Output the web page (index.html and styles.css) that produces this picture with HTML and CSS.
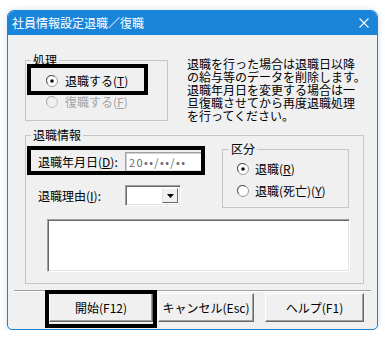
FILE: index.html
```html
<!DOCTYPE html>
<html lang="ja">
<head>
<meta charset="utf-8">
<title>社員情報設定退職／復職</title>
<link rel="stylesheet" href="styles.css">
</head>
<body>
<div class="window">
  <div class="titlebar">
    <span class="title">社員情報設定退職／復職</span>
    <svg class="close" width="10" height="10" viewBox="0 0 10 10"><path d="M0.5 0.5 L9.5 9.5 M9.5 0.5 L0.5 9.5" stroke="#fff" stroke-width="1.1" fill="none"/></svg>
  </div>
  <div class="client">
    <div class="top-row">
      <fieldset class="group g-shori">
        <legend>処理</legend>
        <div class="gbody shori-body">
          <div class="radio">
            <svg width="12" height="12" viewBox="0 0 12 12"><circle cx="6" cy="6" r="5.5" fill="#fff" stroke="#9a9a9a"/><path d="M1.8 8.5 A4.6 4.6 0 0 1 8.5 1.8" stroke="#555" fill="none"/><circle cx="6" cy="6" r="1.8" fill="#111"/></svg>
            <span>退職する(<u>T</u>)</span>
          </div>
          <div class="radio disabled">
            <svg width="12" height="12" viewBox="0 0 12 12"><circle cx="6" cy="6" r="5.5" fill="#f0f0f0" stroke="#c2c2c2"/><path d="M1.8 8.5 A4.6 4.6 0 0 1 8.5 1.8" stroke="#b0b0b0" fill="none"/></svg>
            <span>復職する(<u>F</u>)</span>
          </div>
        </div>
      </fieldset>
      <p class="note">退職を行った場合は退職日以降<br>の給与等のデータを削除します。<br>退職年月日を変更する場合は一<br>旦復職させてから再度退職処理<br>を行ってください。</p>
    </div>
    <fieldset class="group g-info">
      <legend>退職情報</legend>
      <div class="gbody info-body">
        <div class="info-row">
          <div class="fields">
            <div class="field-row">
              <span class="flabel">退職年月日(<u>D</u>):</span>
              <div class="input"><span class="date">20••/••/••</span></div>
            </div>
            <div class="field-row row2">
              <span class="flabel">退職理由(<u>I</u>):</span>
              <div class="combo">
                <span class="combo-field"></span>
                <span class="combo-btn"><svg width="7" height="4" viewBox="0 0 7 4"><path d="M0 0 H7 L3.5 4 Z" fill="#000"/></svg></span>
              </div>
            </div>
          </div>
          <fieldset class="group g-kubun">
            <legend>区分</legend>
            <div class="gbody kubun-body">
              <div class="radio">
                <svg width="12" height="12" viewBox="0 0 12 12"><circle cx="6" cy="6" r="5.5" fill="#fff" stroke="#9a9a9a"/><path d="M1.8 8.5 A4.6 4.6 0 0 1 8.5 1.8" stroke="#555" fill="none"/><circle cx="6" cy="6" r="1.8" fill="#111"/></svg>
                <span>退職(<u>R</u>)</span>
              </div>
              <div class="radio">
                <svg width="12" height="12" viewBox="0 0 12 12"><circle cx="6" cy="6" r="5.5" fill="#fff" stroke="#9a9a9a"/><path d="M1.8 8.5 A4.6 4.6 0 0 1 8.5 1.8" stroke="#555" fill="none"/></svg>
                <span>退職(死亡)(<u>Y</u>)</span>
              </div>
            </div>
          </fieldset>
        </div>
        <div class="memo"></div>
      </div>
    </fieldset>
    <div class="sep"></div>
    <div class="buttons">
      <button class="btn b-start">開始(F12)</button>
      <button class="btn b-cancel">キャンセル(Esc)</button>
      <button class="btn b-help">ヘルプ(F1)</button>
    </div>
  </div>
  <div class="mark m1"></div>
  <div class="mark m2"></div>
  <div class="mark m3"></div>
</div>
</body>
</html>
```
FILE: styles.css
```css
* { box-sizing: border-box; }
body {
  margin: 0;
  background: #fff;
  font-family: "Noto Sans CJK JP", "Noto Sans", sans-serif;
  font-size: 12px;
  color: #000;
}
.window {
  position: relative;
  margin: 10px 0 0 7px;
  width: 371px;
  height: 320px;
  border: 1px solid #1a84d8;
  border-radius: 7px 7px 5px 5px;
  background: #f0f0f0;
  box-shadow: 0 0 6px rgba(120, 170, 220, 0.35);
}
.titlebar {
  display: flex;
  align-items: center;
  height: 24px;
  padding-left: 4px;
  background: #1a84d8;
  color: #fff;
  border-radius: 6px 6px 0 0;
}
.title { line-height: 14px; }
.close { margin-left: auto; margin-right: 8px; }
.client { height: 294px; }
.top-row {
  display: flex;
  height: 68px;
  margin: 18px 0 0 17px;
}
.group {
  border: 1px solid #c6c6c6;
  margin: 0;
  padding: 0;
  min-width: 0;
}
.group legend {
  padding: 0 2px;
  margin-left: 5px;
  line-height: 14px;
}
.g-shori {
  width: 143px;
  height: 68px;
  flex: none;
}
.shori-body { padding: 3px 0 0 20px; }
.radio {
  display: flex;
  align-items: center;
  gap: 7px;
  height: 21px;
  line-height: 14px;
}
.radio svg { flex: none; }
.radio.disabled { color: #a3a3a3; }
.note {
  margin: 4px 0 0 19px;
  line-height: 13px;
  white-space: nowrap;
}
.g-info {
  width: 339px;
  height: 156px;
  margin: 7px 0 0 17px;
}
.info-body { padding-left: 12px; }
.info-row { display: flex; }
.fields {
  width: 165px;
  flex: none;
  padding-top: 10px;
  display: flex;
  flex-direction: column;
}
.field-row {
  display: flex;
  align-items: center;
}
.field-row.row2 { margin-top: 13px; }
.flabel { width: 87px; flex: none; line-height: 14px; }
.input {
  width: 78px;
  height: 20px;
  background: #fff;
  border: 1px solid;
  border-color: #a0a0a0 #fff #fff #a0a0a0;
  box-shadow: inset 1px 1px #d0d0d0, inset -1px -1px #e8e8e8;
  display: flex;
  align-items: center;
  padding-left: 3px;
}
.date {
  font-size: 11px;
  color: #6a6a6a;
  letter-spacing: 1.4px;
  line-height: 12px;
}
.combo {
  display: flex;
  width: 56px;
  height: 21px;
  background: #fff;
  border: 1px solid;
  border-color: #a0a0a0 #fff #fff #a0a0a0;
  box-shadow: inset 1px 1px #696969, inset -1px -1px #e3e3e3;
  padding: 2px;
}
.combo-field { flex: 1; }
.combo-btn {
  width: 16px;
  display: flex;
  align-items: center;
  justify-content: center;
  background: #f0f0f0;
  border: 1px solid;
  border-color: #fff #696969 #696969 #e3e3e3;
}
.g-kubun {
  width: 127px;
  height: 66px;
  flex: none;
  margin-left: 19px;
}
.g-kubun legend { margin-left: 6px; }
.kubun-body { padding: 2px 0 0 14px; }
.g-kubun .radio { height: 22px; gap: 6px; }
.memo {
  width: 303px;
  height: 53px;
  margin: 11px 0 0 9px;
  background: #fff;
  border: 1px solid;
  border-color: #a0a0a0 #fff #fff #a0a0a0;
  box-shadow: inset 1px 1px #696969, inset -1px -1px #e3e3e3;
}
.sep {
  margin: 6px 6px 0 6px;
  height: 2px;
  border-top: 1px solid #a0a0a0;
  border-bottom: 1px solid #fff;
}
.buttons {
  display: flex;
  margin: 1px 0 0 41px;
}
.btn {
  height: 29px;
  font: inherit;
  font-size: 12px;
  color: #000;
  background: #f0f0f0;
  border: 1px solid;
  border-color: #fff #696969 #696969 #fff;
  box-shadow: inset -1px -1px #a0a0a0;
  padding: 0;
  line-height: 14px;
}
.b-start { width: 104px; }
.b-cancel { width: 96px; margin-left: 5px; }
.b-help { width: 99px; margin-left: 11px; }
.mark {
  position: absolute;
  border: 4px solid #000;
}
.m1 { left: 19px; top: 53px; width: 121px; height: 31px; }
.m2 { left: 19px; top: 135px; width: 178px; height: 29px; }
.m3 { left: 37px; top: 279px; width: 112px; height: 38px; }
```
